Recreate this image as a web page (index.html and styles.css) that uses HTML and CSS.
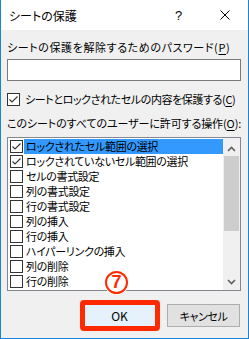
FILE: index.html
```html
<!DOCTYPE html>
<html lang="ja">
<head>
  <meta charset="utf-8" />
  <title>シートの保護</title>
  <link rel="stylesheet" href="styles.css">
</head>
<body>

<div class="dialog">
  <div class="titlebar">
    <span class="title">シートの保護</span>
    <span class="help">?</span>
    <span class="close">
      <svg width="10" height="10" viewBox="0 0 10 10"><path d="M0.5 0.5 L9.5 9.5 M9.5 0.5 L0.5 9.5" stroke="#000" stroke-width="1" fill="none"/></svg>
    </span>
  </div>

  <div class="content">
    <div class="label pw-label">シートの保護を解除するためのパスワード(<u>P</u>)</div>
    <div class="textbox"></div>

    <div class="check-row">
      <span class="box checked"></span>
      <span class="check-text">シートとロックされたセルの内容を保護する(<u>C</u>)</span>
    </div>

    <div class="label list-label">このシートのすべてのユーザーに許可する操作(<u>O</u>):</div>

    <div class="listbox">
      <ul class="items">
        <li class="selected"><span class="box checked"></span><span class="text">ロックされたセル範囲の選択</span></li>
        <li><span class="box checked"></span><span class="text">ロックされていないセル範囲の選択</span></li>
        <li><span class="box"></span><span class="text">セルの書式設定</span></li>
        <li><span class="box"></span><span class="text">列の書式設定</span></li>
        <li><span class="box"></span><span class="text">行の書式設定</span></li>
        <li><span class="box"></span><span class="text">列の挿入</span></li>
        <li><span class="box"></span><span class="text">行の挿入</span></li>
        <li><span class="box"></span><span class="text">ハイパーリンクの挿入</span></li>
        <li><span class="box"></span><span class="text">列の削除</span></li>
        <li><span class="box"></span><span class="text">行の削除</span></li>
      </ul>
      <div class="scrollbar">
        <div class="arrow up">
          <svg width="17" height="17" viewBox="0 0 17 17"><path d="M5 13 L8.5 9.5 L12 13" stroke="#606060" stroke-width="1.6" fill="none"/></svg>
        </div>
        <div class="track"><div class="thumb"></div></div>
        <div class="arrow down">
          <svg width="17" height="17" viewBox="0 0 17 17"><path d="M5 7 L8.5 10.5 L12 7" stroke="#606060" stroke-width="1.6" fill="none"/></svg>
        </div>
      </div>
    </div>

    <div class="buttons">
      <button class="btn ok">OK<span class="step">7</span></button>
      <button class="btn cancel">キャンセル</button>
    </div>
  </div>
</div>

</body>
</html>
```

FILE: styles.css
```css
body {
  margin: 0;
  font-family: "Noto Sans CJK JP", "Noto Sans", sans-serif;
  font-size: 11px;
  font-feature-settings: "palt";
  color: #000;
}

u {
  text-decoration-thickness: 1px;
  text-underline-offset: 2px;
}

.dialog {
  width: 249px;
  height: 339px;
  box-sizing: border-box;
  border: 1px solid #1883d7;
  border-top: 0;
  background-color: #f0f0f0;
  display: flex;
  flex-direction: column;
}

.titlebar {
  height: 30px;
  background-color: #fff;
  display: flex;
  align-items: center;
  padding-left: 8px;
}

.title {
  flex: 1;
  font-size: 12px;
}

.help {
  font-family: "Liberation Sans", sans-serif;
  font-size: 13px;
  width: 10px;
  margin-right: 35px;
}

.close {
  width: 10px;
  height: 10px;
  margin-right: 18px;
  display: flex;
}

.content {
  padding: 0 7px 0 6px;
  display: flex;
  flex-direction: column;
}

.label {
  line-height: 16px;
  height: 16px;
  white-space: nowrap;
}

.pw-label {
  margin-top: 9px;
  letter-spacing: 0.6px;
}

.textbox {
  height: 22px;
  box-sizing: border-box;
  margin-top: 4px;
  border: 1px solid #7a7a7a;
  background-color: #fff;
}

.check-row {
  margin-top: 10px;
  height: 16px;
  line-height: 16px;
  display: flex;
  align-items: center;
  gap: 5px;
  white-space: nowrap;
}

.check-text {
  letter-spacing: -0.4px;
}

.list-label {
  margin-top: 8px;
  letter-spacing: -0.1px;
}

.box {
  width: 13px;
  height: 13px;
  box-sizing: border-box;
  border: 1px solid #333;
  background-color: #fff;
  flex: none;
}

.box.checked {
  background: #fff url("data:image/svg+xml;utf8,<svg xmlns='http://www.w3.org/2000/svg' width='11' height='11' viewBox='0 0 11 11'><path d='M1.5 5.5 L4 8 L9.5 2.5' stroke='%23333' stroke-width='1.1' fill='none'/></svg>") no-repeat center;
}

.listbox {
  margin-top: 6px;
  height: 154px;
  box-sizing: border-box;
  border: 1px solid #828790;
  background-color: #fff;
  display: flex;
}

.items {
  list-style: none;
  margin: 0;
  padding: 1px 0 0 0;
  flex: 1;
  overflow: hidden;
}

.items li {
  height: 15px;
  display: flex;
  align-items: center;
  white-space: nowrap;
}

.items .box {
  margin-left: 2px;
  margin-right: 1px;
}

.items .text {
  flex: 1;
  height: 15px;
  line-height: 15px;
  padding-left: 2px;
  letter-spacing: -0.3px;
}

.items li.selected .text {
  background-color: #3399ff;
}

.scrollbar {
  width: 17px;
  background-color: #f0f0f0;
  display: flex;
  flex-direction: column;
}

.arrow {
  height: 17px;
}

.track {
  flex: 1;
  padding: 1px 1px 0 1px;
}

.thumb {
  height: 75px;
  background-color: #cdcdcd;
}

.buttons {
  margin-top: 13px;
  display: flex;
  justify-content: flex-end;
  gap: 11px;
  padding-right: 1px;
}

.btn {
  width: 73px;
  height: 23px;
  border: 1px solid #adadad;
  background-color: #e1e1e1;
  font-family: inherit;
  font-size: 11px;
  font-feature-settings: "palt";
  padding: 0;
  position: relative;
  color: #000;
}

.btn.ok {
  border-color: #0078d7;
  background-color: #e5f1fb;
  font-size: 12px;
}

.btn.cancel {
  letter-spacing: -0.4px;
}

/* red highlight frame drawn over the OK button */
.btn.ok::before {
  content: "";
  position: absolute;
  top: -5px;
  bottom: -5px;
  left: -4px;
  right: -5px;
  border: 5px solid #ff2a00;
  border-radius: 4px;
}

.step {
  position: absolute;
  left: 21px;
  top: -34px;
  width: 23px;
  height: 23px;
  box-sizing: border-box;
  border: 2px solid #ff2a00;
  border-radius: 50%;
  background-color: #fff;
  box-shadow: 0 0 0 1px #fff;
  color: #ff2a00;
  font-family: "Liberation Sans", sans-serif;
  font-weight: bold;
  font-size: 18px;
  line-height: 19px;
  text-align: center;
  letter-spacing: 0;
}
```
